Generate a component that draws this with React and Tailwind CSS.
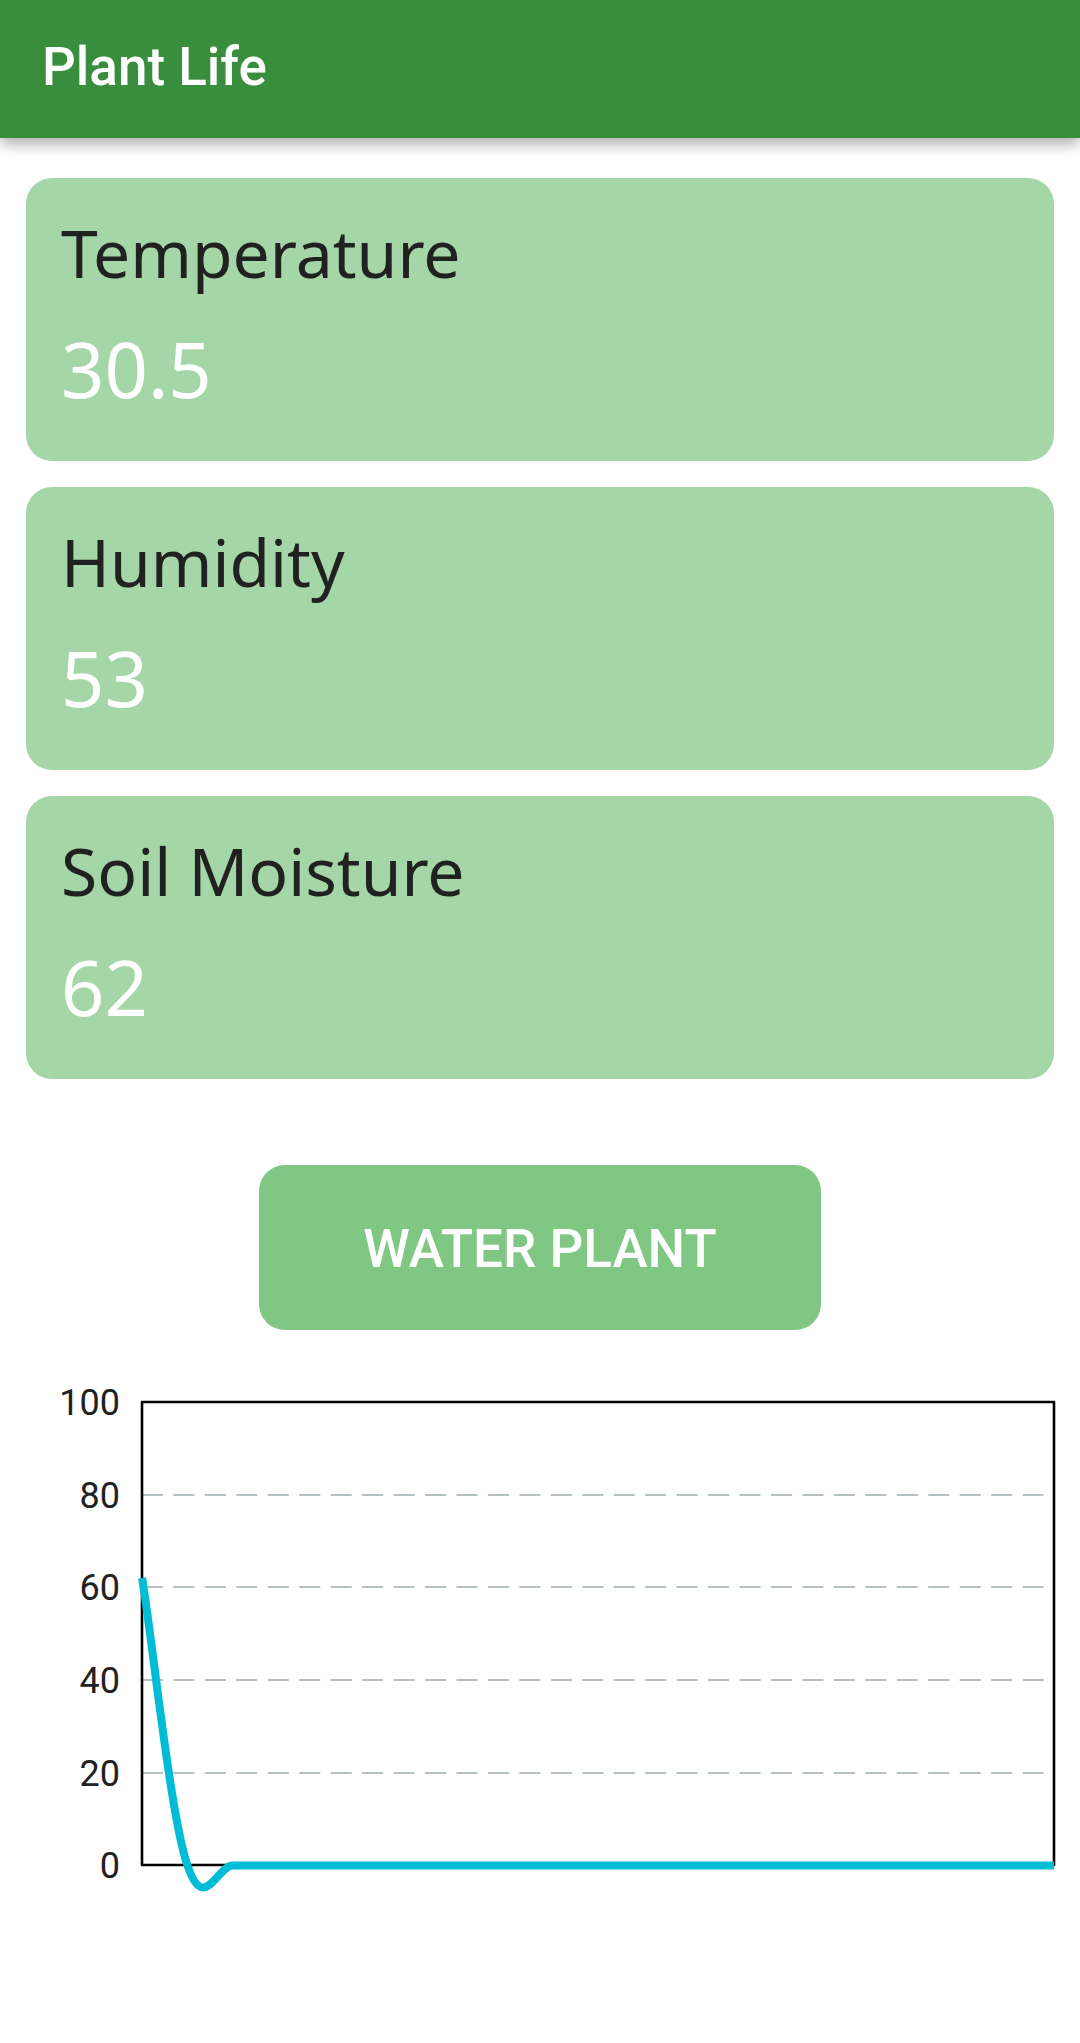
const readings = [
  { label: "Temperature", value: "30.5" },
  { label: "Humidity", value: "53" },
  { label: "Soil Moisture", value: "62" },
];

const ticks = [
  { label: "100", y: 28 },
  { label: "80", y: 121 },
  { label: "60", y: 213 },
  { label: "40", y: 306 },
  { label: "20", y: 399 },
  { label: "0", y: 491 },
];

function ReadingCard({ label, value }) {
  return (
    <article className="rounded-[26px] bg-[#a5d6a7] px-[35px] pt-[29px] pb-10 font-['Noto_Sans',sans-serif]">
      <h2 className="text-[66px] leading-[90px] text-[#212121]">{label}</h2>
      <p className="mt-5 text-[76px] leading-[104px] text-white">{value}</p>
    </article>
  );
}

function MoistureChart() {
  return (
    <svg viewBox="0 0 1080 550" className="mt-11 block w-full" role="img" aria-label="Soil moisture history">
      <g stroke="#b4c0c2" strokeWidth="2" strokeDasharray="21 10.45">
        {ticks.slice(1, 5).map((t) => (
          <line key={t.label} x1="142" x2="1054" y1={t.y} y2={t.y} />
        ))}
      </g>
      <rect x="142" y="28" width="912" height="463" fill="none" stroke="#000" strokeWidth="2.6" strokeLinejoin="round" />
      <path
        d="M142 204C151 253 170 442 187.5 491.5C204 541 217 491.5 233 491.5H1054"
        fill="none"
        stroke="#00bcd4"
        strokeWidth="8"
      />
      <g className="font-['Roboto',sans-serif] text-[36px]" fill="#212121" textAnchor="end">
        {ticks.map((t) => (
          <text key={t.label} x="120" y={t.y + 13}>
            {t.label}
          </text>
        ))}
      </g>
    </svg>
  );
}

export default function App() {
  return (
    <div className="min-h-screen bg-white font-['Roboto',sans-serif]">
      <header className="flex bg-[#388e3c] px-[42px] pt-9 pb-10 shadow-[0_6px_14px_rgba(0,0,0,0.33)]">
        <h1 className="text-[53px] leading-[62px] font-medium text-white">Plant Life</h1>
      </header>
      <main>
        <section className="flex flex-col gap-[26px] px-[26px] pt-10">
          {readings.map((r) => (
            <ReadingCard key={r.label} label={r.label} value={r.value} />
          ))}
        </section>
        <div className="mt-[86px] flex justify-center">
          <button
            type="button"
            className="rounded-[26px] bg-[#81c784] px-[104px] pt-[53px] pb-[50px] text-[53px] leading-[62px] font-medium text-white"
          >
            WATER PLANT
          </button>
        </div>
        <MoistureChart />
      </main>
    </div>
  );
}
